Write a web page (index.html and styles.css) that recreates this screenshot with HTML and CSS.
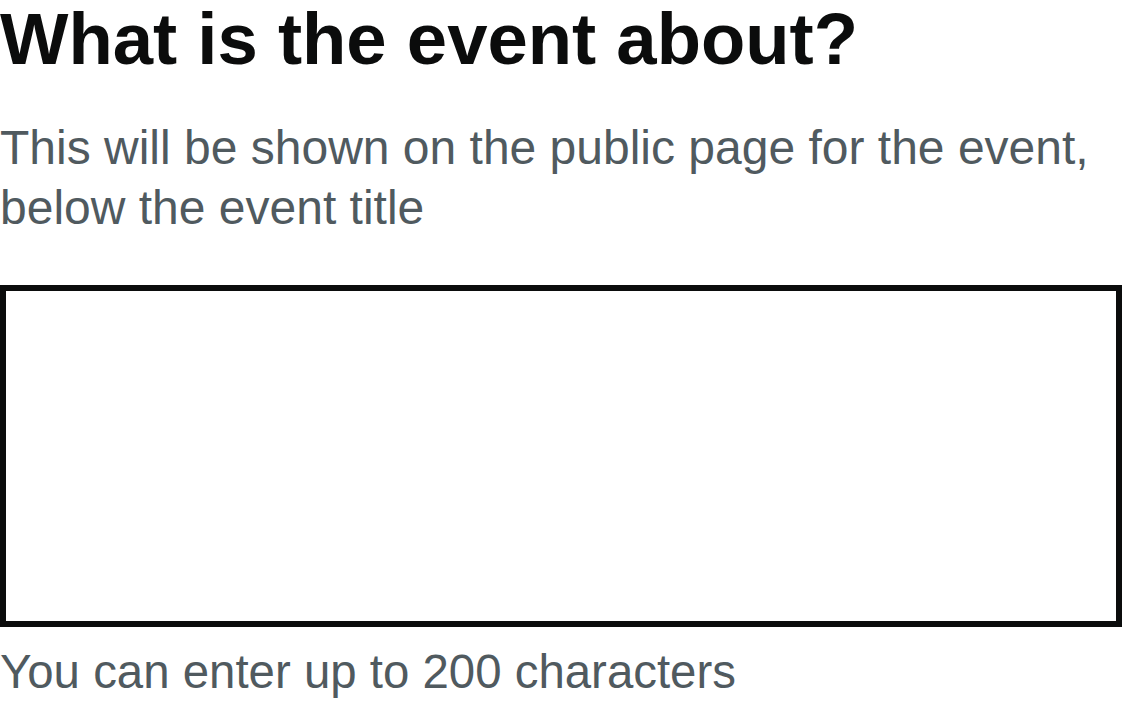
FILE: index.html
```html
<!DOCTYPE html>
<html lang="en">
<head>
<meta charset="utf-8">
<title>What is the event about?</title>
<link rel="stylesheet" href="styles.css">
</head>
<body>
<div class="form-group">
  <h1 class="heading">What is the event about?</h1>
  <div class="hint">This will be shown on the public page for the event, below the event title</div>
  <textarea class="textarea" rows="5" aria-label="Event description"></textarea>
  <div class="count">You can enter up to 200 characters</div>
</div>
</body>
</html>
```

FILE: styles.css
```css
html, body {
  margin: 0;
  padding: 0;
  background: #ffffff;
}
body {
  font-family: "Liberation Sans", Arial, sans-serif;
  color: #0b0c0c;
}
.form-group {
  display: flex;
  flex-direction: column;
}
.heading {
  margin: 0;
  font-size: 72.5px;
  line-height: 78px;
  font-weight: 700;
  color: #0b0c0c;
}
.hint {
  margin-top: 40px;
  font-size: 48px;
  line-height: 60px;
  color: #505a5f;
}
.textarea {
  display: block;
  box-sizing: border-box;
  margin: 47px 0 0 0;
  width: 100%;
  height: 342px;
  border: 6px solid #0b0c0c;
  border-radius: 0;
  padding: 10px;
  resize: none;
  font-family: "Liberation Sans", Arial, sans-serif;
  font-size: 48px;
  background: #ffffff;
}
.count {
  margin-top: 15px;
  font-size: 47.4px;
  line-height: 60px;
  color: #505a5f;
}
```
